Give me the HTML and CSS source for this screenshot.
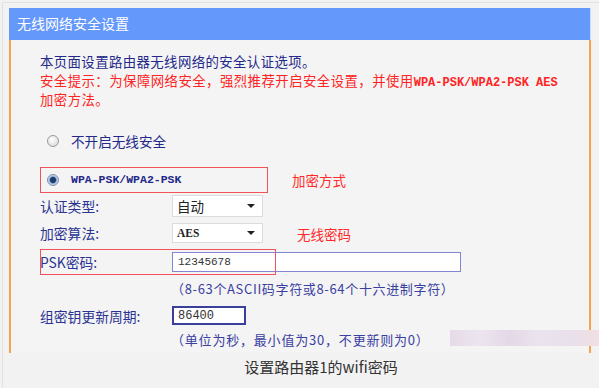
FILE: index.html
```html
<!DOCTYPE html>
<html lang="zh-CN">
<head>
  <meta charset="UTF-8" />
  <title>无线网络安全设置</title>
  <link rel="stylesheet" href="styles.css">
</head>
<body>
  <div class="frame">
    <div class="panel">
      <div class="head">无线网络安全设置</div>
      <div class="content">
        <p class="intro">本页面设置路由器无线网络的安全认证选项。</p>
        <p class="warn">安全提示：为保障网络安全，强烈推荐开启安全设置，并使用<span class="mono">WPA-PSK/WPA2-PSK AES</span><br>加密方法。</p>

        <div class="option off">
          <span class="radio"></span>
          <span>不开启无线安全</span>
        </div>

        <div class="wpa-row">
          <div class="option mark">
            <span class="radio checked"></span>
            <span class="mono">WPA-PSK/WPA2-PSK</span>
          </div>
          <span class="note">加密方式</span>
        </div>

        <div class="field sel-row">
          <label>认证类型:</label>
          <div class="select">自动<span class="arrow"></span></div>
        </div>

        <div class="field sel-row second">
          <label>加密算法:</label>
          <div class="select"><span class="serif">AES</span><span class="arrow"></span></div>
          <span class="pw-note">无线密码</span>
        </div>

        <div class="field psk">
          <label>PSK密码:</label>
          <div class="input wide">12345678</div>
          <span class="mark-box"></span>
        </div>
        <div class="hint">（8-63个ASCII码字符或8-64个十六进制字符）</div>

        <div class="field renew">
          <label>组密钥更新周期:</label>
          <div class="input short">86400</div>
        </div>
        <div class="hint">（单位为秒，最小值为30，不更新则为0）</div>
      </div>
    </div>
    <div class="caption">设置路由器1的wifi密码</div>
  </div>
  <div class="smudge"></div>
</body>
</html>
```

FILE: styles.css
```css
html, body {
  margin: 0;
  padding: 0;
}

body {
  width: 599px;
  height: 388px;
  overflow: hidden;
  background: #f2f2f2;
  font-family: "Noto Sans CJK SC", "Noto Sans", sans-serif;
  position: relative;
}

.frame {
  margin: 2px 0 0 2px;
  height: 390px;
  border-top: 1px solid #e2e2e2;
  border-left: 1px solid #e2e2e2;
  padding: 5px 0 0 6px;
  box-sizing: border-box;
}

.panel {
  width: 582px;
}

.head {
  height: 32px;
  line-height: 31px;
  background: #6598fb;
  color: #fff;
  font-size: 14px;
  padding-left: 8px;
  border-right: 1px solid #c9dcff;
}

.content {
  height: 313px;
  box-sizing: border-box;
  background: #f4f4f4;
  border-left: 2px solid #f7a24c;
  border-right: 2px solid #f7a24c;
  padding: 11px 0 0 29px;
  color: #23288a;
  font-size: 13.4px;
}

p {
  margin: 0;
}

.intro {
  height: 20px;
  line-height: 20px;
  letter-spacing: 0.4px;
}

.warn {
  color: #ff2424;
  height: 38px;
  line-height: 19px;
  letter-spacing: 0.45px;
}

.mono {
  font-family: "Liberation Mono", "DejaVu Sans Mono", monospace;
  font-weight: bold;
  font-size: 12px;
  line-height: 1;
  letter-spacing: 0;
}

.option {
  display: flex;
  align-items: center;
  gap: 12px;
  font-size: 13.6px;
}

.off {
  margin-top: 22px;
  height: 20px;
  padding-left: 7px;
}

.radio {
  width: 12px;
  height: 12px;
  border-radius: 50%;
  border: 1px solid #9a9a9a;
  background: radial-gradient(circle at 40% 35%, #ffffff, #d4d4d4);
  box-sizing: border-box;
}

.radio.checked {
  background: radial-gradient(circle, #1f3c6c 0 2.6px, #8eb0d6 3.6px, #e8eef6 5.5px);
  border-color: #7b8ea8;
}

.wpa-row {
  display: flex;
  align-items: center;
  margin-top: 16px;
}

.mark {
  width: 228px;
  height: 26px;
  box-sizing: border-box;
  border: 1.5px solid #f2525a;
  padding-left: 6px;
}

.mark .mono {
  font-size: 11.5px;
  color: #22288a;
}

.note,
.pw-note {
  color: #ff2b2b;
  font-size: 13.5px;
}

.note {
  margin-left: 24px;
}

.field {
  display: flex;
  align-items: center;
  position: relative;
  font-size: 13.8px;
  color: #2b3392;
}

.field label {
  width: 132px;
}

.sel-row {
  margin-top: 2px;
  height: 22px;
}

.sel-row.second {
  margin-top: 6px;
  height: 20px;
}

.select {
  width: 91px;
  height: 100%;
  box-sizing: border-box;
  background: #fff;
  border: 1px solid #dcdcdc;
  display: flex;
  align-items: center;
  justify-content: space-between;
  padding: 0 7px 0 4px;
  color: #222;
  font-size: 13.5px;
}

.serif {
  font-family: "Liberation Serif", serif;
  font-weight: bold;
  font-size: 11.5px;
}

.arrow {
  width: 0;
  height: 0;
  border-left: 4px solid transparent;
  border-right: 4px solid transparent;
  border-top: 4px solid #222;
}

.pw-note {
  position: absolute;
  left: 257px;
  top: 1px;
}

.psk {
  margin-top: 9px;
  height: 20px;
}

.input {
  height: 100%;
  box-sizing: border-box;
  background: #fff;
  padding-left: 5px;
  display: flex;
  align-items: center;
  font-family: "Liberation Mono", monospace;
  font-size: 11px;
  color: #333;
}

.input.wide {
  width: 289px;
  border: 1.5px solid #8585d8;
}

.mark-box {
  position: absolute;
  left: 0;
  top: -3px;
  width: 236px;
  height: 26px;
  box-sizing: border-box;
  border: 1.5px solid #f2525a;
}

.hint {
  margin: 7px 0 0 131px;
  font-size: 13px;
  height: 20px;
  line-height: 20px;
  letter-spacing: 0.65px;
  color: #3a40a2;
}

.renew {
  margin-top: 7px;
  height: 19px;
}

.input.short {
  width: 74px;
  border: 2px solid #3a3f9c;
  font-size: 12px;
  padding-left: 4px;
}

.renew + .hint {
  margin-top: 5px;
  letter-spacing: 0.8px;
}

.caption {
  width: 582px;
  box-sizing: border-box;
  padding-left: 42px;
  text-align: center;
  font-size: 15px;
  line-height: 20px;
  margin-top: 4px;
  color: #333;
}

.smudge {
  position: absolute;
  left: 450px;
  top: 330px;
  width: 149px;
  height: 16px;
  background: linear-gradient(90deg, #e6dbe8, #ece5ee 20%, #e4d8e6 40%, #ebe4ee 60%, #e8e0ec 80%, #f0dfe2);
}
```
